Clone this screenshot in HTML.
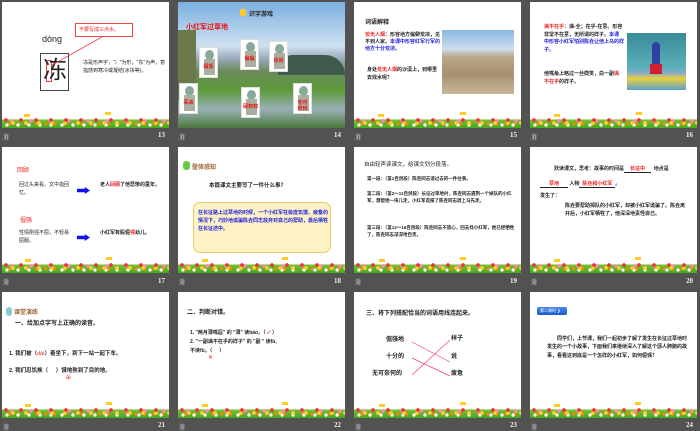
<!DOCTYPE html>
<html><head><meta charset="utf-8"><style>
*{margin:0;padding:0;box-sizing:border-box}
body{width:700px;height:431px;background:#525252;position:relative;overflow:hidden;font-family:"Liberation Sans","Noto Sans CJK SC",sans-serif}
.s{position:absolute;width:167px;height:126px;background:#fff;overflow:hidden}
.g{position:absolute;left:0;right:0;bottom:0;height:11px;background:
radial-gradient(circle at 4px 3px,#e33 1.6px,transparent 2.1px) 0 0/15px 11px,
radial-gradient(circle at 11px 6px,#fc3 1.7px,transparent 2.2px) 0 0/13px 11px,
radial-gradient(circle at 7px 4px,#f8b 1.5px,transparent 2px) 3px 0/19px 11px,
radial-gradient(circle at 5px 8px,#fff 1.4px,transparent 1.9px) 0 0/11px 11px,
radial-gradient(circle at 8px 7px,#f80 1.4px,transparent 1.9px) 0 0/9px 11px,
linear-gradient(#fff 0,#fff 15%,#7b3 30%,#4a2 100%)}
.bf{position:absolute;width:6px;height:3px;background:#fc2}
.a{position:absolute;white-space:nowrap}
.lb{position:absolute;color:#ddd;font-size:6px}
.n{position:absolute;color:#eee;font-size:7px;font-family:"Liberation Serif",serif;font-weight:bold}
.t{font-size:5.5px;line-height:8px;color:#222}
.r{color:#e22}.b{color:#22d}
.sol{position:absolute;width:19px;height:31px;background:#fff;border:1px solid #ddd}
.sol i{position:absolute;left:5px;top:2px;width:9px;height:10px;border-radius:50%;background:#8a9;}
.sol b{position:absolute;left:4px;top:11px;width:11px;height:16px;background:#a9b0a0}
.sol u{position:absolute;left:0;right:0;top:16px;text-align:center;color:#e11;font-size:5px;font-weight:bold;text-decoration:none;line-height:6px}
</style></head><body>

<!-- Row1 -->
<div class="s" style="left:2px;top:2px">
 <div class="a" style="left:40px;top:32px;font-size:9px;color:#222">dòng</div>
 <div class="a" style="left:38px;top:51px;width:29px;height:38px;border:1px solid #444"></div>
 <div class="a" style="left:44px;top:58px;width:6px;height:22px;border:1px solid #e44"></div>
 <div class="a" style="left:41px;top:56px;font-size:24px;line-height:26px;color:#222">冻</div>
 <div class="a" style="left:73px;top:21px;width:58px;height:14px;border:1px solid #e44;font-size:5px;color:#e22;line-height:12px;padding-left:3px">不要写成三点水。</div>
 <svg class="a" style="left:0;top:0" width="167" height="126"><line x1="100" y1="35" x2="50" y2="63" stroke="#e44" stroke-width="0.8"/></svg>
 <div class="a t" style="left:81px;top:58px;white-space:normal;width:85px;line-height:7.5px;font-size:5px">冻是形声字，"冫"为形，"东"为声，意指感到寒冷或凝结(冰块等)。</div>
 <div class="bf" style="left:22px;top:112px"></div><div class="bf" style="left:103px;top:110px"></div>
 <div class="g"></div>
</div>
<div class="lb" style="left:3px;top:132px">浴</div><div class="n" style="left:158px;top:131px">13</div>

<div class="s" style="left:178px;top:2px;background:linear-gradient(#7ab0e0 0,#cfe0f0 35%,#9ab 45%,#6a8a5a 55%,#5c9a3a 70%,#9ab0b8 85%,#4a7a3a 100%)">
 <div class="a" style="left:0;top:28px;width:18px;height:70px;background:#6b7a4a"></div>
 <div class="a" style="left:100px;top:53px;width:67px;height:20px;background:#3d5a4a;border-radius:30px 40px 0 0"></div>
 <div class="a" style="left:62px;top:7px;width:6px;height:7px;background:#fc2;border-radius:2px"></div>
 <div class="a" style="left:71px;top:7px;font-size:6px;font-weight:bold;color:#222">识字游戏</div>
 <div class="a" style="left:8px;top:20px;font-size:7px;font-weight:bold;color:#e11">小红军过草地</div>
 <div class="sol" style="left:21px;top:45px"><i></i><b></b><u>缀饭</u></div>
 <div class="sol" style="left:62px;top:37px"><i></i><b></b><u>偏偏</u></div>
 <div class="sol" style="left:91px;top:39px"><i></i><b></b><u>晃晃</u></div>
 <div class="sol" style="left:1px;top:81px"><i></i><b></b><u>革命</u></div>
 <div class="sol" style="left:63px;top:85px"><i></i><b></b><u>硬邦邦</u></div>
 <div class="sol" style="left:115px;top:81px"><i></i><b></b><u>无可<br>奈何</u></div>
</div>
<div class="lb" style="left:179px;top:132px">浴</div><div class="n" style="left:334px;top:131px">14</div>

<div class="s" style="left:354px;top:2px">
 <div class="a" style="left:11px;top:15px;font-size:6px;font-weight:bold;color:#222">词语解释</div>
 <div class="a t" style="left:11px;top:30px;white-space:normal;width:76px;font-size:5px;line-height:7px;font-weight:bold"><span class="r">荒无人烟</span>：形容地方偏僻荒凉，见不到人家。<span class="b">本课中形容红军行军的地方十分荒凉。</span></div>
 <div class="a t" style="left:13px;top:64px;white-space:normal;width:72px;font-size:5px;line-height:8px;font-weight:bold">身处<span class="r">荒无人烟</span>的沙漠上，到哪里去找水呢？</div>
 <div class="a" style="left:88px;top:28px;width:72px;height:64px;background:linear-gradient(#8ab8e0 0,#cde 30%,#b8a888 42%,#a89070 70%,#c8b898 100%)"></div>
 <div class="bf" style="left:24px;top:112px"></div><div class="bf" style="left:106px;top:110px"></div>
 <div class="g"></div>
</div>
<div class="lb" style="left:355px;top:132px">浴</div><div class="n" style="left:510px;top:131px">15</div>

<div class="s" style="left:530px;top:2px">
 <div class="a t" style="left:14px;top:22px;white-space:normal;width:80px;font-size:5px;line-height:7.5px;font-weight:bold"><span class="r">满不在乎</span>：满-全；在乎-在意。形容非常不在意，无所谓的样子。<span class="b">本课中形容小红军怕别陈垚让他上马的样子。</span></div>
 <div class="a t" style="left:14px;top:68px;white-space:normal;width:80px;font-size:5px;line-height:8px;font-weight:bold">他嘴角上略过一丝微笑，白一副<span class="r">满不在乎</span>的样子。</div>
 <div class="a" style="left:97px;top:31px;width:59px;height:57px;background:linear-gradient(#3a8a9a,#5ab0b8 60%,#8ac 70%,#e8d040 80%,#5aa0d0 100%)"></div>
 <div class="a" style="left:122px;top:40px;width:8px;height:30px;background:#3040a0;border-radius:4px 4px 0 0"></div>
 <div class="a" style="left:120px;top:62px;width:12px;height:10px;background:#d02030"></div>
 <div class="bf" style="left:24px;top:112px"></div><div class="bf" style="left:106px;top:110px"></div>
 <div class="g"></div>
</div>
<div class="lb" style="left:531px;top:132px">浴</div><div class="n" style="left:686px;top:131px">16</div>

<!-- Row2 -->
<div class="s" style="left:2px;top:147px">
 <div class="a r" style="left:15px;top:18px;font-size:6px">回顾</div>
 <div class="a t" style="left:17px;top:35px;white-space:normal;width:50px;font-size:5px;line-height:7.5px">回过头来看。文中指回忆。</div>
 <div class="a" style="left:75px;top:40px;width:13px;height:7px;background:#11e;clip-path:polygon(0 25%,60% 25%,60% 0,100% 50%,60% 100%,60% 75%,0 75%)"></div>
 <div class="a t" style="left:98px;top:34px;white-space:normal;width:62px;font-size:5px;font-weight:bold;line-height:8px">老人<span class="r">回顾</span>了他悲惨的童年。</div>
 <div class="a r" style="left:18px;top:68px;font-size:6px">倔强</div>
 <div class="a t" style="left:17px;top:83px;white-space:normal;width:52px;font-size:5px;line-height:7.5px">性情刚强不屈，不轻易屈服。</div>
 <div class="a" style="left:75px;top:87px;width:13px;height:7px;background:#11e;clip-path:polygon(0 25%,60% 25%,60% 0,100% 50%,60% 100%,60% 75%,0 75%)"></div>
 <div class="a t" style="left:98px;top:82px;white-space:normal;width:62px;font-size:5px;font-weight:bold;line-height:8px">小红军有股倔<span class="r">强</span>劲儿。</div>
 <div class="bf" style="left:23px;top:112px"></div><div class="bf" style="left:104px;top:110px"></div>
 <div class="g"></div>
</div>
<div class="lb" style="left:3px;top:277px">浴</div><div class="n" style="left:158px;top:277px">17</div>

<div class="s" style="left:178px;top:147px">
 <div class="a" style="left:5px;top:14px;width:7px;height:9px;background:#6c4;border-radius:3px"></div>
 <div class="a" style="left:14px;top:15px;font-size:6px;font-weight:bold;color:#963">整体感知</div>
 <div class="a t" style="left:31px;top:35px;font-size:5.5px;font-weight:bold">本篇课文主要写了一件什么事？</div>
 <div class="a" style="left:15px;top:55px;width:138px;height:51px;background:#fdf1c6;border:1px solid #f0c870;border-radius:7px"></div>
 <div class="a t b" style="left:20px;top:62px;white-space:normal;width:130px;font-size:5px;line-height:8px;font-weight:bold">在长征路上过草地的时候，一个小红军在极度饥饿、疲惫的情况下，巧妙地谎骗陈垚同志放弃对自己的帮助，最后牺牲在长征途中。</div>
 <div class="bf" style="left:24px;top:112px"></div><div class="bf" style="left:104px;top:110px"></div>
 <div class="g"></div>
</div>
<div class="lb" style="left:179px;top:277px">浴</div><div class="n" style="left:334px;top:277px">18</div>

<div class="s" style="left:354px;top:147px">
 <div class="a t" style="left:10px;top:14px;font-size:5.5px">自由轻声读课文，给课文划分段落。</div>
 <div class="a t" style="left:13px;top:28px;font-size:4.5px;font-weight:bold">第一段：（第1自然段）陈垚同志请过去的一件往事。</div>
 <div class="a t" style="left:13px;top:43px;white-space:normal;width:150px;font-size:4.5px;line-height:7px;font-weight:bold">第二段：（第2～11自然段）长征过草地时，陈垚同志遇到一个掉队的小红军，想帮他一块儿走，小红军谎报了陈垚同志骑上马先走。</div>
 <div class="a t" style="left:13px;top:77px;white-space:normal;width:150px;font-size:4.5px;line-height:7px;font-weight:bold">第三段：（第12～16自然段）陈垚同志不放心，回去找小红军，他已经牺牲了，陈垚同志深深地自责。</div>
 <div class="bf" style="left:25px;top:112px"></div><div class="bf" style="left:106px;top:110px"></div>
 <div class="g"></div>
</div>
<div class="lb" style="left:355px;top:277px">浴</div><div class="n" style="left:510px;top:277px">19</div>

<div class="s" style="left:530px;top:147px">
 <div class="a t" style="left:24px;top:18px;font-size:5px;font-weight:bold">默读课文，思考：故事的时间是<span class="r" style="border-bottom:0.5px solid #222;padding:0 6px">长征中</span>&nbsp;&nbsp;地点是</div>
 <div class="a t" style="left:10px;top:33px;font-size:5px;font-weight:bold"><span class="r" style="border-bottom:0.5px solid #222;padding:0 9px">草地</span>&nbsp;人物<span class="r" style="border-bottom:0.5px solid #222;padding:0 3px">陈垚和小红军</span>。</div>
 <div class="a t" style="left:10px;top:45px;font-size:5px;font-weight:bold">发生了：</div>
 <div class="a t" style="left:35px;top:55px;white-space:normal;width:120px;font-size:5px;line-height:8px;font-weight:bold">陈垚要帮助掉队的小红军，却被小红军谎骗了。陈垚离开后，小红军牺牲了，他深深地责怪自己。</div>
 <div class="bf" style="left:24px;top:112px"></div><div class="bf" style="left:105px;top:110px"></div>
 <div class="g"></div>
</div>
<div class="lb" style="left:531px;top:277px">浴</div><div class="n" style="left:686px;top:277px">20</div>

<!-- Row3 -->
<div class="s" style="left:2px;top:292px">
 <div class="a" style="left:4px;top:15px;width:6px;height:9px;background:#8cc;border-radius:3px"></div>
 <div class="a" style="left:12px;top:15px;font-size:6px;font-weight:bold;color:#963">课堂演练</div>
 <div class="a t" style="left:13px;top:28px;font-size:6px;font-weight:bold">一、给加点字写上正确的读音。</div>
 <div class="a t" style="left:7px;top:58px;font-size:5.5px;font-weight:bold">1. 我们被（<span class="r" style="font-weight:normal">dǎi</span>）着坐下，到下一站一起下车。</div>
 <div class="a t" style="left:7px;top:75px;font-size:5.5px;font-weight:bold">2. 我们忍饥挨（&nbsp;&nbsp;&nbsp;&nbsp;&nbsp;）饿地熬到了目的地。</div>
 <div class="a r" style="left:64px;top:83px;font-size:6px">ái</div>
 <div class="bf" style="left:23px;top:112px"></div><div class="bf" style="left:104px;top:110px"></div>
 <div class="g"></div>
</div>
<div class="lb" style="left:3px;top:422px">浴</div><div class="n" style="left:158px;top:421px">21</div>

<div class="s" style="left:178px;top:292px">
 <div class="a t" style="left:9px;top:17px;font-size:6px;font-weight:bold">二、判断对错。</div>
 <div class="a t" style="left:12px;top:37px;font-size:5px;font-weight:bold">1. "两月薄嘴唇" 的 "薄" 读báo。（ <span class="r">✓</span> ）</div>
 <div class="a t" style="left:12px;top:46px;font-size:5px;font-weight:bold">2. "一副满不在乎的样子" 的 "副 " 读fù,</div>
 <div class="a t" style="left:12px;top:55px;font-size:5px;font-weight:bold">不读fù。（&nbsp;&nbsp;&nbsp;&nbsp;&nbsp;）</div>
 <div class="a r" style="left:30px;top:62px;font-size:6px">✕</div>
 <div class="bf" style="left:24px;top:112px"></div><div class="bf" style="left:104px;top:110px"></div>
 <div class="g"></div>
</div>
<div class="lb" style="left:179px;top:422px">浴</div><div class="n" style="left:334px;top:421px">22</div>

<div class="s" style="left:354px;top:292px">
 <div class="a t" style="left:12px;top:18px;font-size:6px;font-weight:bold">三、将下列搭配恰当的词语用线连起来。</div>
 <div class="a t" style="left:32px;top:44px;font-size:6px;font-weight:bold">倔强地</div>
 <div class="a t" style="left:32px;top:61px;font-size:6px;font-weight:bold">十分的</div>
 <div class="a t" style="left:18px;top:78px;font-size:6px;font-weight:bold">无可奈何的</div>
 <div class="a t" style="left:97px;top:43px;font-size:6px;font-weight:bold">样子</div>
 <div class="a t" style="left:97px;top:61px;font-size:6px;font-weight:bold">说</div>
 <div class="a t" style="left:97px;top:78px;font-size:6px;font-weight:bold">疲惫</div>
 <svg class="a" style="left:0;top:0" width="167" height="126"><g stroke="#e47" stroke-width="0.7"><line x1="58" y1="50" x2="96" y2="70"/><line x1="58" y1="66" x2="96" y2="84"/><line x1="58" y1="83" x2="96" y2="48"/></g></svg>
 <div class="bf" style="left:25px;top:112px"></div><div class="bf" style="left:106px;top:110px"></div>
 <div class="g"></div>
</div>
<div class="lb" style="left:355px;top:422px">浴</div><div class="n" style="left:510px;top:421px">23</div>

<div class="s" style="left:530px;top:292px">
 <div class="a" style="left:7px;top:15px;width:30px;height:8px;background:linear-gradient(#4a8ae8,#1a5ac8);border-radius:2px;color:#fff;font-size:4px;line-height:8px;padding-left:3px">第二课时 ❯</div>
 <div class="a t" style="left:17px;top:43px;white-space:normal;width:142px;font-size:5px;line-height:8.3px;font-weight:bold;text-indent:10px">同学们，上节课，我们一起初步了解了发生在长征过草地时发生的一个小故事，下面我们来继续深入了解这个感人肺腑的故事，看看这到底是一个怎样的小红军，如何倔强？</div>
 <div class="bf" style="left:24px;top:112px"></div><div class="bf" style="left:105px;top:110px"></div>
 <div class="g"></div>
</div>
<div class="lb" style="left:531px;top:422px">浴</div><div class="n" style="left:686px;top:421px">24</div>

</body></html>
